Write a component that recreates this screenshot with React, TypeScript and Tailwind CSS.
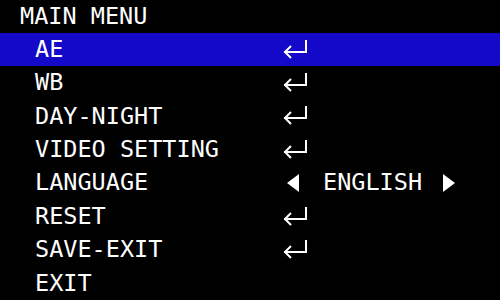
const ITEMS: { label: string; kind: "enter" | "lang" | "none" }[] = [
  { label: "AE", kind: "enter" },
  { label: "WB", kind: "enter" },
  { label: "DAY-NIGHT", kind: "enter" },
  { label: "VIDEO SETTING", kind: "enter" },
  { label: "LANGUAGE", kind: "lang" },
  { label: "RESET", kind: "enter" },
  { label: "SAVE-EXIT", kind: "enter" },
  { label: "EXIT", kind: "none" },
];

function EnterIcon() {
  return (
    <svg width="25" height="22" viewBox="0 0 25 22" fill="none" stroke="white" strokeWidth="2" strokeLinecap="square">
      <path d="M23 2 V13 H2" />
      <path d="M8 7 L2 13 L8 19" strokeLinecap="butt" />
    </svg>
  );
}

function Triangle({ dir }: { dir: "left" | "right" }) {
  return (
    <svg width="12" height="18" viewBox="0 0 12 18">
      {dir === "left" ? (
        <polygon points="12,0 12,18 0,9" fill="white" />
      ) : (
        <polygon points="0,0 0,18 12,9" fill="white" />
      )}
    </svg>
  );
}

export default function App() {
  return (
    <div
      className="w-[500px] h-[300px] bg-black text-white flex flex-col text-[23.5px] leading-none overflow-hidden"
      style={{ fontFamily: '"DejaVu Sans Mono", "Liberation Mono", monospace' }}
    >
      {/* Title */}
      <div className="h-[33px] flex items-center pl-[20px]">MAIN MENU</div>

      {/* Menu rows */}
      {ITEMS.map((item, i) => (
        <div
          key={item.label}
          className={`h-[33.4px] flex items-center ${i === 0 ? "bg-[#1409c8]" : ""}`}
        >
          <div className="w-[283px] pl-[35px] shrink-0">{item.label}</div>
          {item.kind === "enter" && <EnterIcon />}
          {item.kind === "lang" && (
            <div className="flex items-center">
              <span className="ml-[4px]">
                <Triangle dir="left" />
              </span>
              <span className="ml-[24px]">ENGLISH</span>
              <span className="ml-[21px]">
                <Triangle dir="right" />
              </span>
            </div>
          )}
        </div>
      ))}
    </div>
  );
}
